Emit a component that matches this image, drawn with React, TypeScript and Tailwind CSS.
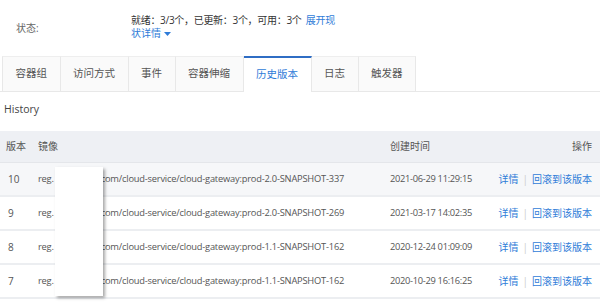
import React from 'react';

const tabs = ['容器组', '访问方式', '事件', '容器伸缩', '历史版本', '日志', '触发器'];

const rows = [
  { v: '10', tag: 'prod-2.0-SNAPSHOT-337', time: '2021-06-29 11:29:15' },
  { v: '9', tag: 'prod-2.0-SNAPSHOT-269', time: '2021-03-17 14:02:35' },
  { v: '8', tag: 'prod-1.1-SNAPSHOT-162', time: '2020-12-24 01:09:09' },
  { v: '7', tag: 'prod-1.1-SNAPSHOT-162', time: '2020-10-29 16:16:25' },
];

export default function App() {
  return (
    <div
      className="relative w-[600px] h-[303px] overflow-hidden bg-white text-[10px] text-[#333]"
      style={{ fontFamily: '"Open Sans", "Noto Sans CJK SC", sans-serif' }}
    >
      {/* status */}
      <div className="flex pt-[14px] h-[56px]">
        <div className="w-[131px] pl-[16px] pt-[7px] text-[#666]">状态:</div>
        <div className="leading-[13px]">
          <div className="tracking-[-0.3px]">
            就绪：3/3个，已更新：3个，可用：3个 <span className="text-[#2f7cd8] ml-[2px]">展开现</span>
          </div>
          <div className="text-[#2f7cd8] flex items-center gap-[3px]">
            状详情
            <svg width="7" height="4" viewBox="0 0 7 4"><path d="M0 0h7L3.5 4z" fill="#2f7cd8" /></svg>
          </div>
        </div>
      </div>

      {/* tabs */}
      <div className="flex pl-[2px] border-b border-[#e8e8e8] h-[36px]">
        {tabs.map((t, i) => (
          <div
            key={t}
            className={
              'flex items-center justify-center px-[12.5px] text-[10.5px] border-r border-[#e8e8e8] ' +
              (i === 0 ? 'border-l ' : '') +
              (i === 4
                ? 'bg-white text-[#2f7cd8] border-t-2 border-t-[#2f6dc4] mb-[-1px]'
                : 'bg-[#fafafa] text-[#555] border-t border-t-[#eee]')
            }
          >
            {t}
          </div>
        ))}
      </div>

      <div className="pl-[4px] pt-[10px] h-[39px] text-[10.5px] text-[#444]">History</div>

      {/* table */}
      <div className="text-[#555]">
        <div className="flex items-center h-[32px] bg-[#eef0f4] border-b border-[#e4e6ea]">
          <div className="w-[38px] pl-[6px]">版本</div>
          <div className="w-[352px]">镜像</div>
          <div className="flex-1">创建时间</div>
          <div className="pr-[8px]">操作</div>
        </div>
        {rows.map((r, i) => (
          <div
            key={r.v}
            className={
              'flex items-center h-[34px] border-b-2 border-[#eceef1] ' + (i === 0 ? 'bg-[#f6f7f9]' : 'bg-white')
            }
          >
            <div className="w-[38px] pl-[8px]">{r.v}</div>
            <div className="w-[352px] whitespace-nowrap text-[9.3px] tracking-[-0.2px]">
              reg.<span className="inline-block w-[47px]" />com/cloud-service/cloud-gateway:{r.tag}
            </div>
            <div className="flex-1 whitespace-nowrap text-[9.3px] tracking-[-0.3px]">{r.time}</div>
            <div className="pr-[8px] flex items-center text-[#2f7cd8]">
              详情<span className="mx-[4px] text-[#ccc]">|</span>回滚到该版本
            </div>
          </div>
        ))}
      </div>

      {/* masking box over image host */}
      <div className="absolute left-[55px] top-[167px] w-[48px] h-[129px] bg-white shadow-[2px_2px_3px_rgba(0,0,0,0.35)]" />
    </div>
  );
}
